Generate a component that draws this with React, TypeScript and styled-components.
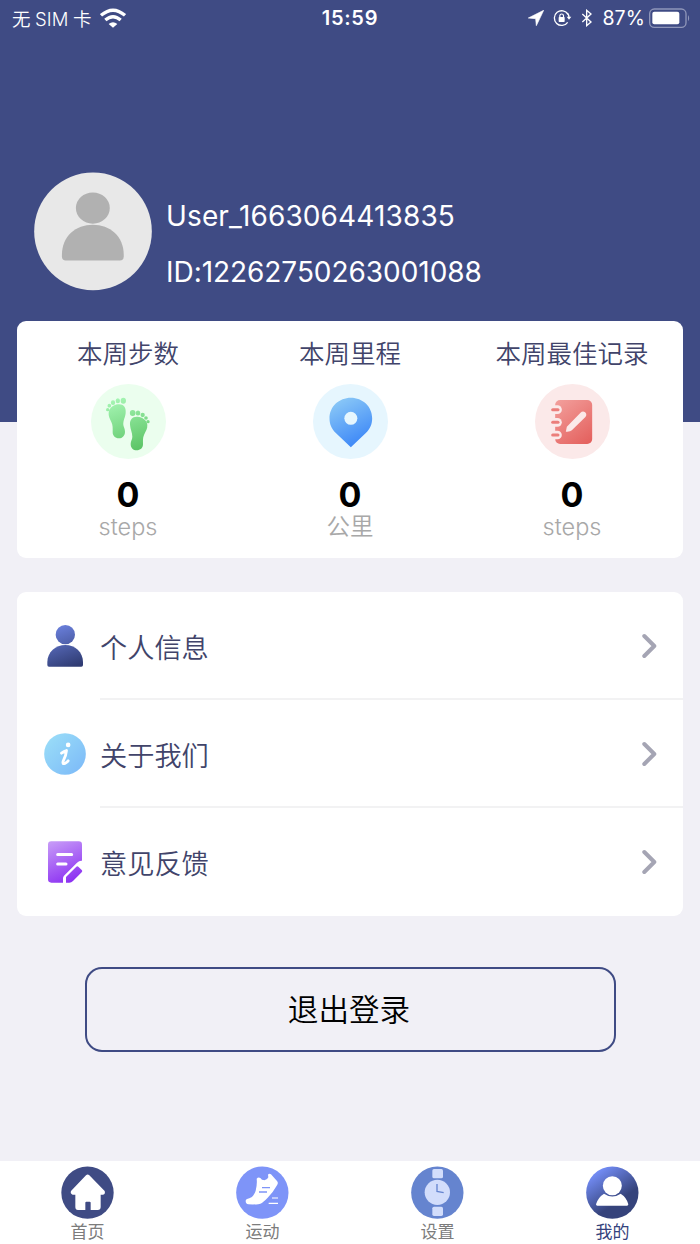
import React from "react";
import styled, { createGlobalStyle } from "styled-components";

const Global = createGlobalStyle`
  * { box-sizing: border-box; }
  body { margin: 0; background: #f1f0f6; }
`;

const Screen = styled.div`
  width: 700px;
  height: 1244px;
  display: flex;
  flex-direction: column;
  background: #f1f0f6;
  font-family: Inter, "Noto Sans CJK SC", sans-serif;
  overflow: hidden;
`;

const Hero = styled.header`
  height: 422px;
  flex: none;
  background: #3f4b84;
  color: #fff;
`;

const StatusBar = styled.div`
  height: 36px;
  padding: 0 9px 0 12px;
  display: grid;
  grid-template-columns: 1fr auto 1fr;
  align-items: center;
  font-size: 18.5px;
`;

const Carrier = styled.div`
  display: flex;
  align-items: center;
  gap: 8px;
  white-space: pre;
  font-weight: 350;
`;

const CarrierName = styled.span`
  word-spacing: -1px;
  letter-spacing: 0.15px;
`;

const Clock = styled.div`
  font-weight: 600;
  font-size: 20px;
  letter-spacing: 0.7px;
  margin-right: 3px;
`;

const StatusIcons = styled.div`
  display: flex;
  align-items: center;
  justify-content: flex-end;
  gap: 9px;
`;

const Percent = styled.span`
  margin-right: -5px;
  font-size: 19.5px;
  letter-spacing: 0.1px;
`;

const Profile = styled.div`
  margin-top: 136px;
  padding-left: 34px;
  display: flex;
  gap: 14px;
`;

const ProfileText = styled.div`
  padding-top: 16px;
  font-size: 28px;
  line-height: 56px;
`;

const ProfileLine = styled.div<{ $spacing: number }>`
  letter-spacing: ${(p) => p.$spacing}px;
`;

const Card = styled.section`
  margin: 0 17px;
  background: #fff;
  border-radius: 9px;
  flex: none;
`;

const StatsCard = styled(Card)`
  margin-top: -101px;
  height: 237px;
  display: grid;
  grid-template-columns: repeat(3, 1fr);
`;

const Stat = styled.div`
  display: flex;
  flex-direction: column;
  align-items: center;
  padding-top: 14px;
`;

const StatTitle = styled.div`
  color: #41446a;
  font-size: 25.5px;
  font-weight: 350;
  line-height: 38px;
  height: 38px;
  margin-bottom: 11px;
`;

const StatValue = styled.div`
  margin-top: 15px;
  font-size: 34px;
  line-height: 41px;
  font-weight: 650;
  color: #000;
`;

const StatUnit = styled.div`
  font-size: 23.5px;
  font-weight: 350;
  line-height: 24px;
  height: 24px;
  color: #a8a8a8;
`;

const MenuCard = styled(Card)`
  margin-top: 34px;
  height: 324px;
  padding-left: 27px;
`;

const MenuRow = styled.div`
  height: 108px;
  display: grid;
  grid-template-columns: 56px 1fr;
  align-items: center;
`;

const MenuBody = styled.div<{ $divider: boolean }>`
  height: 108px;
  display: flex;
  align-items: center;
  justify-content: space-between;
  padding: 2px 26px 0 0;
  border-bottom: 2px solid ${(p) => (p.$divider ? "#f2f2f3" : "transparent")};
  color: #41446a;
  font-size: 27.2px;
  font-weight: 350;
`;

const Logout = styled.button`
  margin: 51px auto 0;
  width: 531px;
  height: 85px;
  flex: none;
  border: 2px solid #3f4b84;
  border-radius: 17px;
  background: transparent;
  padding: 0 2px 3px 0;
  color: #000;
  font-family: inherit;
  font-size: 30.6px;
  font-weight: 350;
`;

const TabBar = styled.nav`
  margin-top: auto;
  height: 83px;
  flex: none;
  background: #fff;
  display: grid;
  grid-template-columns: repeat(4, 1fr);
`;

const Tab = styled.div<{ $active?: boolean }>`
  display: flex;
  flex-direction: column;
  align-items: center;
  padding-top: 5px;
  font-size: 17px;
  line-height: 26px;
  color: ${(p) => (p.$active ? "#34427c" : "#7c7c7c")};
`;

const Icon = styled.svg`
  display: block;
  flex: none;
`;

const Wifi = () => (
  <Icon width="26" height="20" viewBox="303 19 78 60" fill="none" stroke="#fff" strokeWidth="10">
    <path d="M306 41 Q342 10 378 41" />
    <path d="M319 55 Q342 35 365 55" />
    <path d="M342 78 L329 67 Q342 57 355 67Z" fill="#fff" stroke="none" />
  </Icon>
);

const Location = () => (
  <Icon width="16" height="16" viewBox="84 29 48 48">
    <path d="M131 30 L109 76 L107 55 L85 53Z" fill="#fff" stroke="#fff" strokeWidth="2" strokeLinejoin="round" />
  </Icon>
);

const RotationLock = () => (
  <Icon width="19" height="18" viewBox="160 27 57 54" fill="none" stroke="#fff" strokeWidth="4">
    <path d="M205 43 A22 22 0 1 0 204 67" />
    <path d="M203 39 Q208 45 208 52" />
    <path d="M201 50 H215 L208 59Z" fill="#fff" stroke="none" />
    <rect x="177" y="51" width="18" height="15" rx="2" fill="#fff" stroke="none" />
    <path d="M180.500 52 V47 Q181 42 186 42 Q191 42 191.500 47 V52" strokeWidth="3.500" />
  </Icon>
);

const Bluetooth = () => (
  <Icon width="12" height="18" viewBox="245 26 36 54" fill="none" stroke="#fff" strokeWidth="4">
    <path d="M249 41 L275 65 L262 76 V30 L275 41 L249 65" />
  </Icon>
);

const Battery = () => (
  <Icon width="42" height="20" viewBox="448 21 126 60">
    <rect x="450" y="24" width="109" height="55" rx="14" fill="none" stroke="#8f96b9" strokeWidth="4" />
    <rect x="458" y="32" width="81" height="38" rx="6" fill="#fff" />
    <path d="M565 42 Q572 51 565 61Z" fill="#8f96b9" />
  </Icon>
);

const Avatar = () => (
  <Icon width="118" height="119" viewBox="42 37 355 357">
    <circle cx="219.500" cy="215" r="177" fill="#e8e8e8" />
    <ellipse cx="219" cy="145" rx="51" ry="47" fill="#b1b1b1" />
    <path d="M126 286 C126 229 168 195 219 195 S312 229 312 286 V290 Q312 303 300 303 H138 Q126 303 126 290Z" fill="#b1b1b1" />
  </Icon>
);

const Feet = () => (
  <Icon width="75" height="75" viewBox="63 162 225 225">
    <defs>
      <linearGradient id="foot" gradientUnits="userSpaceOnUse" x1="140" y1="205" x2="195" y2="360">
        <stop offset="0" stopColor="#a5f5b3" />
        <stop offset="1" stopColor="#5dc567" />
      </linearGradient>
    </defs>
    <circle cx="175.500" cy="274.500" r="112.500" fill="#ebfeee" />
    <g fill="url(#foot)">
      <path d="M144 223 C159 221 169 231 167 249 C166 262 159 271 160 285 C161 292 165 296 165 305 C165 317 157 325 147 325 C135 325 128 317 128 307 C128 295 129 287 124 276 C119 265 115 258 116 248 C117 235 129 225 144 223Z" />
      <ellipse cx="160" cy="212" rx="8" ry="9" />
      <ellipse cx="143.500" cy="212" rx="6.500" ry="7.500" />
      <ellipse cx="129" cy="218" rx="6.500" ry="7" />
      <circle cx="118" cy="227" r="5.500" />
      <circle cx="113" cy="239" r="5" />
      <path d="M202 260 C187 259 179 269 180 284 C181 298 187 307 187 320 C187 329 182 332 182 342 C182 354 190 361 200 361 C211 361 219 354 219 343 C219 332 218 325 222 315 C227 303 233 296 232 284 C230 270 218 261 202 260Z" />
      <ellipse cx="188" cy="249" rx="8.500" ry="9" />
      <ellipse cx="204" cy="249" rx="7" ry="7.500" />
      <circle cx="218" cy="255" r="6.500" />
      <circle cx="228" cy="264" r="5.500" />
      <circle cx="234" cy="275" r="5" />
    </g>
  </Icon>
);

const Pin = () => (
  <Icon width="75" height="75" viewBox="68.500 162 225 225">
    <defs>
      <linearGradient id="pin" gradientUnits="userSpaceOnUse" x1="140" y1="210" x2="205" y2="335">
        <stop offset="0" stopColor="#8ac8f7" />
        <stop offset="1" stopColor="#418bf7" />
      </linearGradient>
    </defs>
    <circle cx="181" cy="274.500" r="112.500" fill="#e6f6fe" />
    <path fill="url(#pin)" d="M182 352 L137 309 C124 297 118 283 118 265 C118 229 147 203 182 203 S246 229 246 265 C246 283 240 297 227 309Z" />
    <circle cx="182" cy="265" r="19.500" fill="#e6f6fe" />
  </Icon>
);

const Notebook = () => (
  <Icon width="75" height="75" viewBox="164.500 162 225 225">
    <defs>
      <linearGradient id="book" gradientUnits="userSpaceOnUse" x1="230" y1="215" x2="325" y2="340">
        <stop offset="0" stopColor="#f29d9a" />
        <stop offset="1" stopColor="#e4615e" />
      </linearGradient>
    </defs>
    <circle cx="277" cy="274.500" r="112.500" fill="#fbe9e9" />
    <rect x="225" y="210" width="111" height="132" rx="15" fill="url(#book)" />
    {[239, 277, 315].map((y) => (
      <g key={y}>
        <path d={`M215 ${y - 13} H232 a13 13 0 0 1 0 26 H215Z`} fill="#fbe9e9" />
        <rect x="213" y={y - 4.5} width="25" height="9" rx="4.500" fill="#eb7e7b" />
      </g>
    ))}
    <path d="M257 305 L260 290 L301 248 Q308 241 315 247 Q322 254 315 262 L275 301 Q270 306 257 305Z" fill="#fbe9e9" />
  </Icon>
);

const PersonIcon = () => (
  <Icon width="42" height="44" viewBox="102 132 126 132">
    <defs>
      <linearGradient id="person" gradientUnits="userSpaceOnUse" x1="140" y1="138" x2="185" y2="262">
        <stop offset="0" stopColor="#6a80dc" />
        <stop offset="1" stopColor="#303c73" />
      </linearGradient>
    </defs>
    <g fill="url(#person)">
      <circle cx="166" cy="164" r="29" />
      <path d="M112 246 C112 217 137 195 166 195 S219 217 219 246 V255 Q219 260 214 260 H117 Q112 260 112 255Z" />
    </g>
  </Icon>
);

const InfoIcon = () => (
  <Icon width="42" height="42" viewBox="102 459 127 127">
    <defs>
      <linearGradient id="info" x1="0.100" y1="0.100" x2="0.900" y2="0.900">
        <stop offset="0" stopColor="#99dcf8" />
        <stop offset="1" stopColor="#7ebcf8" />
      </linearGradient>
    </defs>
    <circle cx="165.500" cy="522.500" r="63" fill="url(#info)" />
    <circle cx="175" cy="495" r="7" fill="#fff" />
    <path d="M155 520 Q163 514 170 512 Q169 526 160 544 Q157 554 165 551 Q171 548 175 543" fill="none" stroke="#fff" strokeWidth="8.500" strokeLinecap="round" strokeLinejoin="round" />
  </Icon>
);

const FeedbackIcon = () => (
  <Icon width="42" height="44" viewBox="102 150 126 132">
    <defs>
      <linearGradient id="note" gradientUnits="userSpaceOnUse" x1="135" y1="154" x2="190" y2="278">
        <stop offset="0" stopColor="#c597f7" />
        <stop offset="1" stopColor="#8a2df2" />
      </linearGradient>
    </defs>
    <g fill="url(#note)">
      <path d="M124 154 H206 Q216 154 216 164 V212 Q208 211 201 218 L162 257 Q159 260 159 265 V278 H124 Q114 278 114 268 V164 Q114 154 124 154Z" />
      <path d="M168 261 L199 230 Q202 227 205 230 L216 241 Q218 244 215 247 L189 273 Q184 278 178 278 H168Z" />
    </g>
    <path d="M143 193.500 H185 M143 222 H168" stroke="#fff" strokeWidth="9" strokeLinecap="round" />
  </Icon>
);

const Chevron = () => (
  <Icon width="15" height="26" viewBox="0 0 15 26" fill="none" stroke="#a5a5b4" strokeWidth="4" strokeLinecap="round" strokeLinejoin="round">
    <path d="M2.300 3 L12.300 13 L2.300 23" />
  </Icon>
);

const HomeTab = () => (
  <Icon width="53" height="53" viewBox="64 48 159 159">
    <circle cx="143.500" cy="128" r="78.500" fill="#3f4b84" />
    <path d="M139 76 Q144 71 149 76 L195 123 Q198 132 190 134 H183 V171 Q183 180 174 180 H153 V158 Q153 155 150 155 H140 Q137 155 137 158 V180 H115 Q107 180 107 171 V134 H99 Q91 131 94 123Z" fill="#fff" />
  </Icon>
);

const SportTab = () => (
  <Icon width="53" height="53" viewBox="588 48 159 159">
    <circle cx="667" cy="128" r="78.500" fill="#7e94f8" />
    <path d="M650 86 Q655 80 661 84 L666 89 Q680 94 685 82 L684 74 Q687 69 693 73 L711 93 Q716 99 711 106 Q699 128 683 143 Q670 157 661 161 Q655 164 625 163 Q617 162 617 153 Q617 147 628 145 Q642 139 647 122 Q652 104 650 86Z" fill="#fff" />
    <path d="M666 113 H690 M657 126 H681" stroke="#7e94f8" strokeWidth="4" />
    <path d="M696 144 H714 M686 160 H714" stroke="#fff" strokeWidth="3.500" />
  </Icon>
);

const WatchTab = () => (
  <Icon width="53" height="53" viewBox="34 48 159 159">
    <circle cx="113" cy="128" r="78.500" fill="#6584cf" />
    <g fill="#d2ddfb">
      <rect x="98" y="57" width="32" height="28" rx="5" />
      <rect x="98" y="170" width="32" height="28" rx="5" />
      <circle cx="113" cy="127" r="38" />
    </g>
    <path d="M112 102 V124 L132 128" fill="none" stroke="#6584cf" strokeWidth="4" />
  </Icon>
);

const MineTab = () => (
  <Icon width="53" height="53" viewBox="558 48 159 159">
    <defs>
      <linearGradient id="mine" x1="0.150" y1="0.100" x2="0.700" y2="0.900">
        <stop offset="0" stopColor="#7690fb" />
        <stop offset="0.750" stopColor="#35437b" />
      </linearGradient>
    </defs>
    <circle cx="637" cy="128" r="78.500" fill="url(#mine)" />
    <circle cx="637" cy="107" r="28.500" fill="#fff" />
    <path d="M588 163 Q594 142 612 131 Q637 148 662 131 Q680 142 685 163 Q685 167 681 167 H592 Q588 167 588 163Z" fill="#fff" />
  </Icon>
);

const stats = [
  { title: "本周步数", icon: <Feet />, value: "0", unit: "steps" },
  { title: "本周里程", icon: <Pin />, value: "0", unit: "公里" },
  { title: "本周最佳记录", icon: <Notebook />, value: "0", unit: "steps" },
];

const menu = [
  { label: "个人信息", icon: <PersonIcon /> },
  { label: "关于我们", icon: <InfoIcon /> },
  { label: "意见反馈", icon: <FeedbackIcon /> },
];

const tabs = [
  { label: "首页", icon: <HomeTab /> },
  { label: "运动", icon: <SportTab /> },
  { label: "设置", icon: <WatchTab /> },
  { label: "我的", icon: <MineTab />, active: true },
];

export default function App() {
  return (
    <Screen>
      <Global />
      <Hero>
        <StatusBar>
          <Carrier>
            <CarrierName>无 SIM 卡</CarrierName>
            <Wifi />
          </Carrier>
          <Clock>15:59</Clock>
          <StatusIcons>
            <Location />
            <RotationLock />
            <Bluetooth />
            <Percent>87%</Percent>
            <Battery />
          </StatusIcons>
        </StatusBar>
        <Profile>
          <Avatar />
          <ProfileText>
            <ProfileLine $spacing={0.13}>User_1663064413835</ProfileLine>
            <ProfileLine $spacing={-0.05}>ID:12262750263001088</ProfileLine>
          </ProfileText>
        </Profile>
      </Hero>
      <StatsCard>
        {stats.map((s) => (
          <Stat key={s.title}>
            <StatTitle>{s.title}</StatTitle>
            {s.icon}
            <StatValue>{s.value}</StatValue>
            <StatUnit>{s.unit}</StatUnit>
          </Stat>
        ))}
      </StatsCard>
      <MenuCard>
        {menu.map((m, i) => (
          <MenuRow key={m.label}>
            {m.icon}
            <MenuBody $divider={i < menu.length - 1}>
              <span>{m.label}</span>
              <Chevron />
            </MenuBody>
          </MenuRow>
        ))}
      </MenuCard>
      <Logout>退出登录</Logout>
      <TabBar>
        {tabs.map((t) => (
          <Tab key={t.label} $active={t.active}>
            {t.icon}
            {t.label}
          </Tab>
        ))}
      </TabBar>
    </Screen>
  );
}
